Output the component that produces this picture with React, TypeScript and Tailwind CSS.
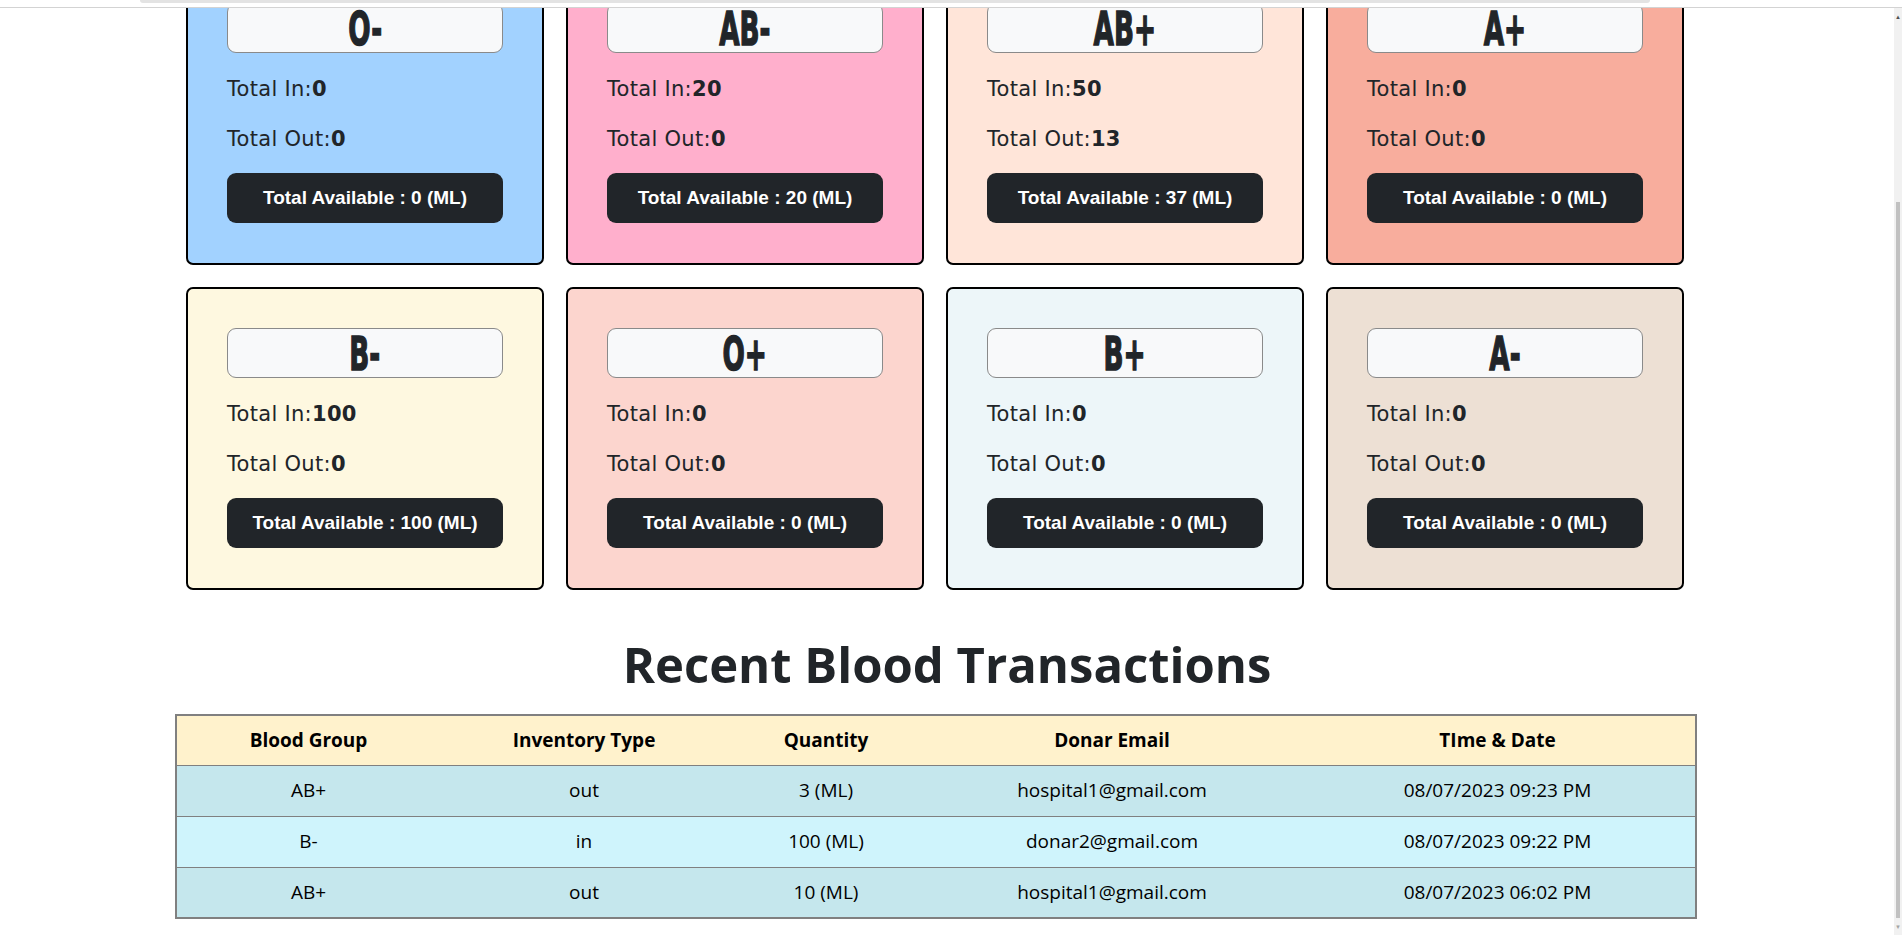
import { useLayoutEffect, useRef } from 'react'

type Stock = { group: string; totalIn: number; totalOut: number; bg: string }

const stock: Stock[] = [
  { group: 'O-', totalIn: 0, totalOut: 0, bg: 'bg-[#a2d2ff]' },
  { group: 'AB-', totalIn: 20, totalOut: 0, bg: 'bg-[#ffafcc]' },
  { group: 'AB+', totalIn: 50, totalOut: 13, bg: 'bg-[#ffe5d9]' },
  { group: 'A+', totalIn: 0, totalOut: 0, bg: 'bg-[#f8ad9d]' },
  { group: 'B-', totalIn: 100, totalOut: 0, bg: 'bg-[#fef8e0]' },
  { group: 'O+', totalIn: 0, totalOut: 0, bg: 'bg-[#fcd5ce]' },
  { group: 'B+', totalIn: 0, totalOut: 0, bg: 'bg-[#edf6f9]' },
  { group: 'A-', totalIn: 0, totalOut: 0, bg: 'bg-[#ede0d4]' },
]

const transactions = [
  { group: 'AB+', type: 'out', qty: 3, email: 'hospital1@gmail.com', date: '08/07/2023 09:23 PM' },
  { group: 'B-', type: 'in', qty: 100, email: 'donar2@gmail.com', date: '08/07/2023 09:22 PM' },
  { group: 'AB+', type: 'out', qty: 10, email: 'hospital1@gmail.com', date: '08/07/2023 06:02 PM' },
]

function StockCard({ item }: { item: Stock }) {
  return (
    <div className={`rounded-[7px] border-2 border-black px-[39px] pt-[39px] pb-[40px] ${item.bg}`}>
      <div className="flex h-[50px] items-center justify-center overflow-hidden rounded-[9px] border border-[#8a8a8a] bg-[#f8f9fa]">
        <span className="inline-block scale-x-[0.56] font-['DejaVu_Sans',sans-serif] text-[47px] leading-none font-bold text-[#212529] [-webkit-text-stroke:1.5px_#212529]">
          {item.group}
        </span>
      </div>
      <p className="mt-[24px] h-[24px] font-['DejaVu_Sans',sans-serif] text-[21px] leading-[24px] tracking-[0.3px] text-[#212529]">
        Total In:<b>{item.totalIn}</b>
      </p>
      <p className="mt-[26px] h-[24px] font-['DejaVu_Sans',sans-serif] text-[21px] leading-[24px] tracking-[0.3px] text-[#212529]">
        Total Out:<b>{item.totalOut}</b>
      </p>
      <div className="mt-[22px] flex h-[50px] items-center justify-center rounded-[9px] bg-[#212529] font-['Liberation_Sans',Arial,sans-serif] text-[19px] font-bold text-white">
        Total Available : {item.totalIn - item.totalOut} (ML)
      </div>
    </div>
  )
}

export default function App() {
  const scroller = useRef<HTMLDivElement>(null)

  useLayoutEffect(() => {
    if (scroller.current) scroller.current.scrollTop = scroller.current.scrollHeight
  }, [])

  return (
    <div className="flex h-screen flex-col overflow-hidden bg-white">
      <div className="h-[8px] shrink-0 border-b border-[#d3d3d3] bg-white">
        <div className="ml-[140px] h-[3px] w-[1510px] rounded-b-full bg-[#e3e3e3]" />
      </div>
      <div className="flex min-h-0 flex-1">
        <div
          ref={scroller}
          className="min-w-0 flex-1 overflow-y-auto [scrollbar-width:none] [&::-webkit-scrollbar]:hidden"
        >
          <div className="pt-[184px] pb-[16px]">
            <div className="ml-[175px] w-[1520px]">
              <div className="grid grid-cols-4 gap-[22px] px-[11px]">
                {stock.map((item) => (
                  <StockCard key={item.group} item={item} />
                ))}
              </div>
            </div>

            <h1 className="mt-[45px] text-center font-['Open_Sans',sans-serif] text-[49px] leading-[59px] font-bold text-[#212529]">
              Recent Blood Transactions
            </h1>

            <div className="mt-[20px] ml-[175px] w-[1520px]">
              <table className="w-full table-fixed border-collapse border-2 border-[#808080] text-center font-['Open_Sans',sans-serif] text-[19px] text-black">
                <colgroup>
                  <col className="w-[264px]" />
                  <col className="w-[288px]" />
                  <col className="w-[196px]" />
                  <col className="w-[376px]" />
                  <col className="w-[396px]" />
                </colgroup>
                <thead>
                  <tr className="h-[50px] border-b border-[#808080] bg-[#fff2cc]">
                    <th className="font-bold">Blood Group</th>
                    <th className="font-bold">Inventory Type</th>
                    <th className="font-bold">Quantity</th>
                    <th className="font-bold">Donar Email</th>
                    <th className="font-bold">TIme &amp; Date</th>
                  </tr>
                </thead>
                <tbody>
                  {transactions.map((t, i) => (
                    <tr
                      key={i}
                      className={`h-[51px] border-b border-[#808080] ${i % 2 === 0 ? 'bg-[#c5e7ed]' : 'bg-[#cff4fc]'}`}
                    >
                      <td>{t.group}</td>
                      <td>{t.type}</td>
                      <td>{t.qty} (ML)</td>
                      <td>{t.email}</td>
                      <td>{t.date}</td>
                    </tr>
                  ))}
                </tbody>
              </table>
            </div>
          </div>
        </div>

        {/* scrollbar track, the headless browser hides the native one */}
        <div className="flex w-[8px] shrink-0 flex-col bg-[#f1f1f1]">
          <div className="flex h-[17px] items-center justify-center text-[6px] leading-none text-[#505050]">▲</div>
          <div className="mt-[177px] mx-[2px] h-[716px] bg-[#c1c1c1]" />
          <div className="flex h-[17px] items-center justify-center text-[6px] leading-none text-[#a3a3a3]">▼</div>
        </div>
      </div>
    </div>
  )
}
